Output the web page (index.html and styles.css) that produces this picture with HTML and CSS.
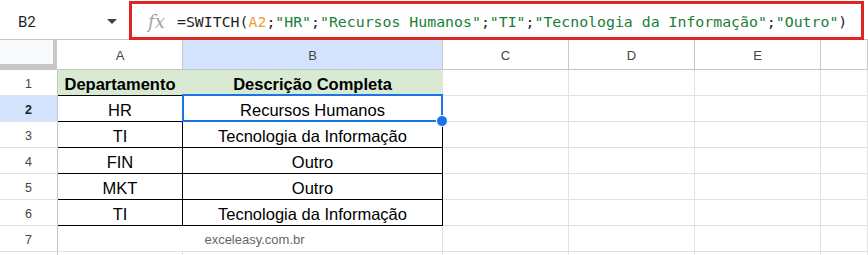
FILE: index.html
```html
<!DOCTYPE html>
<html lang="pt-BR">
<head>
    <meta charset="UTF-8">
    <title>SWITCH - Planilha</title>
    <link rel="stylesheet" href="styles.css">
</head>
<body>

    <div class="formula-row">
        <div class="name-box">
            <span class="cell-ref">B2</span>
            <span class="dropdown"></span>
        </div>
        <div class="formula-bar">
            <span class="fx">fx</span>
            <span class="formula">=SWITCH(<span class="ref">A2</span>;<span class="str">"HR"</span>;<span class="str">"Recursos Humanos"</span>;<span class="str">"TI"</span>;<span class="str">"Tecnologia da Informação"</span>;<span class="str">"Outro"</span>)</span>
        </div>
    </div>

    <div class="sheet">
        <!-- cabeçalho das colunas -->
        <div class="corner"></div>
        <div class="col-head">A</div>
        <div class="col-head sel">B</div>
        <div class="col-head">C</div>
        <div class="col-head">D</div>
        <div class="col-head">E</div>
        <div class="col-head"></div>

        <!-- linha 1 -->
        <div class="row-head">1</div>
        <div class="cell title b-bottom">Departamento</div>
        <div class="cell title b-bottom">Descrição Completa</div>
        <div class="cell"></div><div class="cell"></div><div class="cell"></div><div class="cell"></div>

        <!-- linha 2 -->
        <div class="row-head sel">2</div>
        <div class="cell boxed">HR</div>
        <div class="cell boxed active">Recursos Humanos<span class="selection"><span class="handle"></span></span></div>
        <div class="cell"></div><div class="cell"></div><div class="cell"></div><div class="cell"></div>

        <!-- linha 3 -->
        <div class="row-head">3</div>
        <div class="cell boxed">TI</div>
        <div class="cell boxed">Tecnologia da Informação</div>
        <div class="cell"></div><div class="cell"></div><div class="cell"></div><div class="cell"></div>

        <!-- linha 4 -->
        <div class="row-head">4</div>
        <div class="cell boxed">FIN</div>
        <div class="cell boxed">Outro</div>
        <div class="cell"></div><div class="cell"></div><div class="cell"></div><div class="cell"></div>

        <!-- linha 5 -->
        <div class="row-head">5</div>
        <div class="cell boxed">MKT</div>
        <div class="cell boxed">Outro</div>
        <div class="cell"></div><div class="cell"></div><div class="cell"></div><div class="cell"></div>

        <!-- linha 6 -->
        <div class="row-head">6</div>
        <div class="cell boxed">TI</div>
        <div class="cell boxed">Tecnologia da Informação</div>
        <div class="cell"></div><div class="cell"></div><div class="cell"></div><div class="cell"></div>

        <!-- linha 7 -->
        <div class="row-head">7</div>
        <div class="cell watermark">exceleasy.com.br</div>
        <div class="cell"></div><div class="cell"></div><div class="cell"></div><div class="cell"></div>

        <!-- linha 8 (cortada na borda) -->
        <div class="row-head"></div>
        <div class="cell"></div><div class="cell"></div><div class="cell"></div><div class="cell"></div><div class="cell"></div><div class="cell"></div>
    </div>

</body>
</html>
```

FILE: styles.css
```css
body {
    margin: 0;
    background-color: #fff;
    font-family: "Liberation Sans", Arial, sans-serif;
    color: #000;
    overflow: hidden;
}
.formula-row {
    display: flex;
    height: 40px;
    align-items: flex-start;
}
.name-box {
    width: 129px;
    height: 40px;
    display: flex;
    align-items: center;
    box-sizing: border-box;
    padding: 3px 12px 0 18px;
}
.cell-ref {
    flex: 1;
    font-family: Roboto, "Liberation Sans", sans-serif;
    font-size: 15px;
    color: #1f1f1f;
}
.dropdown {
    width: 0;
    height: 0;
    border-left: 5px solid transparent;
    border-right: 5px solid transparent;
    border-top: 5px solid #444;
}
.formula-bar {
    margin-top: 1px;
    width: 735px;
    height: 39px;
    box-sizing: border-box;
    border: 3px solid #e02424;
    display: flex;
    align-items: center;
    padding-left: 16px;
    padding-top: 3px;
    position: relative;
    z-index: 2;
}
.fx {
    font-family: "DejaVu Serif", "Liberation Serif", serif;
    font-style: italic;
    font-size: 18px;
    color: #a0a4a8;
    width: 29px;
    margin-top: -1px;
}
.formula {
    font-family: "DejaVu Sans Mono", "Liberation Mono", monospace;
    font-size: 14.85px;
    color: #1f1f1f;
    white-space: nowrap;
}
.formula .ref {
    color: #f29d2f;
}
.formula .str {
    color: #188038;
}
.sheet {
    display: grid;
    grid-template-columns: 58px 125px 260px 126px 126px 126px 1fr;
    grid-template-rows: 30px;
    grid-auto-rows: 26px;
    border-top: 1px solid #c4c7c5;
    margin-top: -1px;
}
.sheet > div {
    box-sizing: border-box;
    border-right: 1px solid #e1e1e1;
    border-bottom: 1px solid #e1e1e1;
    display: flex;
    align-items: center;
    justify-content: center;
    white-space: nowrap;
}
.sheet > .corner {
    background-color: #f8f9fa;
    box-shadow: inset -4px -5px 0 #c7c7c7;
    border-right: 1px solid #fff;
    border-bottom: 1px solid #c7c7c7;
}
.sheet > .col-head {
    font-size: 13px;
    color: #444;
    border-right-color: #c4c7c5;
    border-bottom-color: #c4c7c5;
    padding-top: 2px;
}
.sheet > .row-head {
    font-size: 12.5px;
    color: #444;
    border-right-color: #c4c7c5;
    border-bottom-color: #e1e1e1;
    padding-top: 2px;
}
.sheet > .sel {
    background-color: #d3e3fd;
}
.sheet > .row-head.sel {
    font-weight: bold;
    color: #1f1f1f;
}
.sheet > .cell {
    font-size: 16.5px;
    padding-top: 3px;
}
.sheet > .title {
    background-color: #d9ead3;
    font-weight: bold;
}
.sheet > .b-bottom {
    border-bottom-color: #000;
}
.sheet > .boxed {
    border-right-color: #000;
    border-bottom-color: #000;
}
.active {
    position: relative;
}
.selection {
    position: absolute;
    top: -2px;
    left: -1px;
    right: -1px;
    bottom: -1px;
    border: 2px solid #1a73e8;
    z-index: 3;
}
.handle {
    position: absolute;
    right: -7px;
    bottom: -7px;
    width: 10px;
    height: 10px;
    border-radius: 50%;
    background-color: #1a73e8;
    border: 1px solid #fff;
}
.sheet > .watermark {
    grid-column: span 2;
    font-size: 13px;
    color: #666;
    padding-left: 9px;
    padding-top: 1px;
}
```
